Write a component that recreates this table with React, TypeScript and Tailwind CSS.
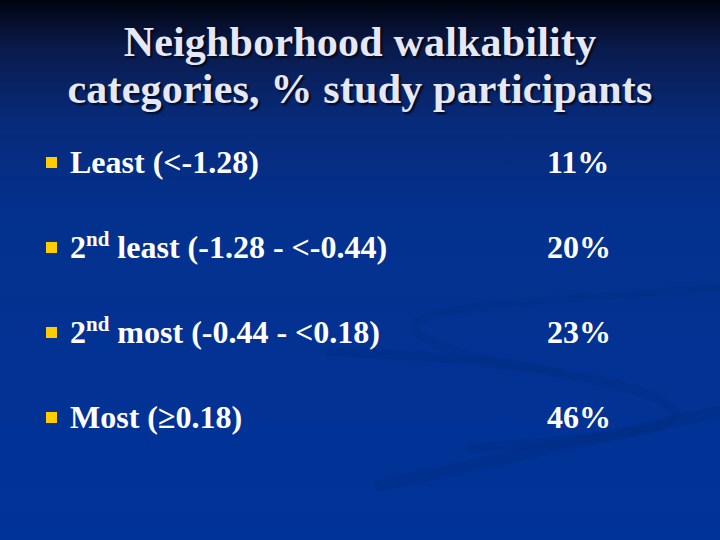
import React from "react";

const Sup = () => <sup className="text-[21px] relative -top-[12px]">nd</sup>;

const rows: { label: React.ReactNode; pct: string }[] = [
  { label: <>Least (&lt;-1.28)</>, pct: "11%" },
  {
    label: (
      <>
        2<Sup /> least (-1.28 - &lt;-0.44)
      </>
    ),
    pct: "20%",
  },
  {
    label: (
      <>
        2<Sup /> most (-0.44 - &lt;0.18)
      </>
    ),
    pct: "23%",
  },
  { label: <>Most (≥0.18)</>, pct: "46%" },
];

export default function App() {
  return (
    <div
      className="relative w-[720px] h-[540px] overflow-hidden bg-[linear-gradient(180deg,#01040f_0%,#0a1b4c_9%,#072a7a_22%,#03318e_40%,#003399_100%)] font-['Liberation_Serif',serif]"
    >
      <svg
        className="absolute inset-0 pointer-events-none"
        width="720"
        height="540"
        viewBox="0 0 720 540"
      >
        <path
          d="M 330 352 C 470 355, 640 378, 672 408 C 692 430, 600 440, 470 448"
          fill="none"
          stroke="#00266f"
          strokeOpacity="0.18"
          strokeWidth="9"
          strokeLinecap="round"
        />
        <path
          d="M 380 485 C 500 460, 620 432, 720 412"
          fill="none"
          stroke="#00266f"
          strokeOpacity="0.2"
          strokeWidth="12"
          strokeLinecap="round"
        />
        <path
          d="M 720 288 C 560 300, 420 305, 415 325 C 412 345, 480 360, 560 372"
          fill="none"
          stroke="#00266f"
          strokeOpacity="0.12"
          strokeWidth="8"
          strokeLinecap="round"
        />
      </svg>

      <div className="relative flex flex-col">
        <div className="pt-[19px] text-center text-[42px] leading-[47px] font-bold tracking-[0.2px] text-[#e6e8f8] [text-shadow:2px_2px_2px_rgba(0,0,10,0.75)]">
          <div>Neighborhood walkability</div>
          <div>categories, % study participants</div>
        </div>

        <div className="mt-[6px] flex flex-col">
          {rows.map((r, i) => (
            <div key={i} className="flex items-center h-[85px] text-[32px] font-bold text-white">
              <div className="ml-[46px] w-[11px] h-[11px] bg-[#ffcc00] mt-[2px]" />
              <div className="ml-[13px] w-[477px] whitespace-nowrap">{r.label}</div>
              <div className="whitespace-nowrap">{r.pct}</div>
            </div>
          ))}
        </div>
      </div>
    </div>
  );
}
